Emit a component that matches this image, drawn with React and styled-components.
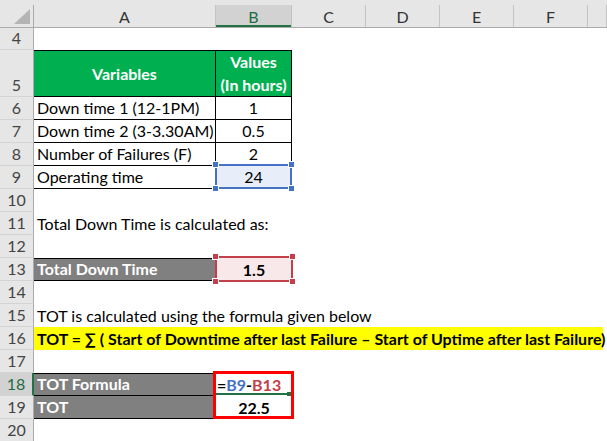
import React from "react";
import styled, { createGlobalStyle } from "styled-components";

const GlobalStyle = createGlobalStyle`
  html, body {
    margin: 0;
    padding: 0;
    background: #fff;
  }
  body {
    font-family: Lato, "Liberation Sans", sans-serif;
    font-size: 16px;
  }
`;

// column widths in px, row header first
const W = { head: 34, A: 182, B: 76, C: 74, D: 74, E: 74, F: 74, G: 19 };

const Sheet = styled.div`
  width: 607px;
  height: 441px;
  overflow: hidden;
  display: flex;
  flex-direction: column;
  background: #fff;
`;

const HeaderRow = styled.div`
  display: flex;
  flex: none;
  height: 28px;
  box-sizing: border-box;
  background: #e6e6e6;
  border-bottom: 1px solid #ababab;
`;

const Corner = styled.div`
  width: ${W.head}px;
  flex: none;
  display: flex;
  align-items: flex-end;
  justify-content: flex-end;
  box-sizing: border-box;
  margin-top: 5px;
  border-right: 1px solid #ababab;
  padding: 0 3px 3px 0;
`;

const ColHead = styled.div`
  width: ${(p) => p.$w}px;
  flex: none;
  box-sizing: border-box;
  margin-top: 5px;
  height: 22px;
  border-right: 1px solid #c3c3c3;
  display: flex;
  align-items: center;
  justify-content: center;
  color: ${(p) => (p.$on ? "#1e6b44" : "#333")};
  background: ${(p) => (p.$on ? "#d2d2d2" : "transparent")};
  box-shadow: ${(p) => (p.$on ? "inset 0 -2px 0 #217346" : "none")};
`;

const Row = styled.div`
  display: flex;
  flex: none;
  height: ${(p) => p.$h}px;
`;

const RowHead = styled.div`
  width: ${W.head}px;
  flex: none;
  box-sizing: border-box;
  height: 100%;
  display: flex;
  align-items: flex-end;
  justify-content: center;
  line-height: 22px;
  background: ${(p) => (p.$on ? "#d2d2d2" : "#e6e6e6")};
  color: ${(p) => (p.$on ? "#1e6b44" : "#444")};
  border-right: ${(p) => (p.$on ? "2px solid #217346" : "1px solid #ababab")};
  border-bottom: 1px solid #d4d4d4;
`;

const Cell = styled.div`
  position: relative;
  box-sizing: border-box;
  width: ${(p) => (p.$w ? `${p.$w}px` : "auto")};
  flex: ${(p) => (p.$grow ? 1 : "none")};
  height: 100%;
  display: flex;
  flex-direction: column;
  justify-content: ${(p) => (p.$middle ? "center" : "flex-end")};
  align-items: ${(p) => (p.$center ? "center" : "flex-start")};
  text-align: ${(p) => (p.$center ? "center" : "left")};
  padding: 0 3px 0 ${(p) => (p.$pl !== undefined ? p.$pl : 3)}px;
  white-space: nowrap;
  line-height: 22px;
  background: ${(p) => p.$fill || "transparent"};
  color: ${(p) => p.$ink || "#000"};
  font-weight: ${(p) => (p.$bold ? 700 : 400)};
  border-right: ${(p) => (p.$box ? "1px solid #000" : "none")};
  border-bottom: ${(p) => (p.$box || p.$under ? "1px solid #000" : "none")};
  border-top: ${(p) => (p.$top ? "1px solid #000" : "none")};
`;

const Line = styled.span`
  display: block;
  line-height: ${(p) => p.$lh || 22}px;
`;

// reference highlight drawn over a cell (blue / red with corner handles)
const Mark = styled.div`
  position: absolute;
  z-index: 1;
  box-sizing: border-box;
  top: -2px;
  left: -1px;
  right: -1px;
  bottom: -1px;
  border: 2px solid ${(p) => p.$c};
  pointer-events: none;
`;

const Handle = styled.span`
  position: absolute;
  width: 5px;
  height: 5px;
  background: ${(p) => p.$c};
  box-shadow: 0 0 0 1px #fff;
  ${(p) => p.$y}: -4px;
  ${(p) => p.$x}: -4px;
`;

const Frame = styled.div`
  position: absolute;
  z-index: 2;
  box-sizing: border-box;
  top: -2px;
  left: -3px;
  width: 81px;
  height: 48px;
  border: 3px solid #ff0000;
  pointer-events: none;
`;

const Active = styled.div`
  position: absolute;
  z-index: 1;
  left: 0;
  right: 3px;
  bottom: 1px;
  height: 2px;
  background: #217346;
  &::after {
    content: "";
    position: absolute;
    right: -2px;
    top: -1px;
    width: 4px;
    height: 4px;
    background: #217346;
  }
`;

const Ref = styled.span`
  color: ${(p) => p.$c};
`;

const BLUE = "#4472c4";
const RED = "#c3404a";
const GRAY = "#808080";
const GREEN = "#00b050";

const Highlight = ({ c }) => (
  <Mark $c={c}>
    <Handle $c={c} $x="left" $y="top" />
    <Handle $c={c} $x="right" $y="top" />
    <Handle $c={c} $x="left" $y="bottom" />
    <Handle $c={c} $x="right" $y="bottom" />
  </Mark>
);

const Blank = ({ n, on }) => (
  <Row $h={23}>
    <RowHead $on={on}>{n}</RowHead>
    <Cell $grow />
  </Row>
);

const TextRow = ({ n, children }) => (
  <Row $h={23}>
    <RowHead>{n}</RowHead>
    <Cell $grow>{children}</Cell>
  </Row>
);

const DataRow = ({ n, label, value }) => (
  <Row $h={23}>
    <RowHead>{n}</RowHead>
    <Cell $w={W.A} $box>{label}</Cell>
    <Cell $w={W.B} $box $center>{value}</Cell>
  </Row>
);

export default function App() {
  return (
    <>
      <GlobalStyle />
      <Sheet>
        <HeaderRow>
          <Corner>
            <svg width="16" height="15" viewBox="0 0 16 15">
              <polygon points="16,0 16,15 0,15" fill="#b4b4b4" />
            </svg>
          </Corner>
          <ColHead $w={W.A}>A</ColHead>
          <ColHead $w={W.B} $on>B</ColHead>
          <ColHead $w={W.C}>C</ColHead>
          <ColHead $w={W.D}>D</ColHead>
          <ColHead $w={W.E}>E</ColHead>
          <ColHead $w={W.F}>F</ColHead>
          <ColHead $w={W.G} />
        </HeaderRow>

        <Row $h={22}>
          <RowHead>4</RowHead>
          <Cell $grow />
        </Row>

        <Row $h={47}>
          <RowHead>5</RowHead>
          <Cell $w={W.A} $box $top $middle $center $bold $fill={GREEN} $ink="#fff">
            Variables
          </Cell>
          <Cell $w={W.B} $box $top $center $bold $fill={GREEN} $ink="#fff">
            <Line $lh={23}>Values</Line>
            <Line $lh={23}>(In hours)</Line>
          </Cell>
        </Row>

        <DataRow n={6} label="Down time 1 (12-1PM)" value="1" />
        <DataRow n={7} label="Down time 2 (3-3.30AM)" value="0.5" />
        <DataRow n={8} label="Number of Failures (F)" value="2" />

        <Row $h={23}>
          <RowHead>9</RowHead>
          <Cell $w={W.A} $box>Operating time</Cell>
          <Cell $w={W.B} $box $center $fill="#e8eef9">
            24
            <Highlight c={BLUE} />
          </Cell>
        </Row>

        <Blank n={10} />
        <TextRow n={11}>Total Down Time is calculated as:</TextRow>
        <Blank n={12} />

        <Row $h={23}>
          <RowHead>13</RowHead>
          <Cell $w={W.A} $top $under $bold $fill={GRAY} $ink="#fff">
            Total Down Time
          </Cell>
          <Cell $w={W.B} $center $bold $fill="#f9e8e9">
            1.5
            <Highlight c={RED} />
          </Cell>
        </Row>

        <Blank n={14} />
        <TextRow n={15}>TOT is calculated using the formula given below</TextRow>

        <Row $h={23}>
          <RowHead>16</RowHead>
          <Cell $w={569} $bold $fill="#ffff00">
            TOT = ∑ ( Start of Downtime after last Failure – Start of Uptime after last Failure)
          </Cell>
        </Row>

        <Blank n={17} />

        <Row $h={23}>
          <RowHead $on>18</RowHead>
          <Cell $w={W.A} $top $under $bold $fill={GRAY} $ink="#fff">
            TOT Formula
          </Cell>
          <Cell $w={W.B} $bold $pl={1}>
            <span>
              =<Ref $c={BLUE}>B9</Ref>-<Ref $c={RED}>B13</Ref>
            </span>
            <Active />
            <Frame />
          </Cell>
        </Row>

        <Row $h={23}>
          <RowHead>19</RowHead>
          <Cell $w={W.A} $under $bold $fill={GRAY} $ink="#fff">
            TOT
          </Cell>
          <Cell $w={W.B} $center $bold>
            22.5
          </Cell>
        </Row>

        <Blank n={20} />
      </Sheet>
    </>
  );
}
